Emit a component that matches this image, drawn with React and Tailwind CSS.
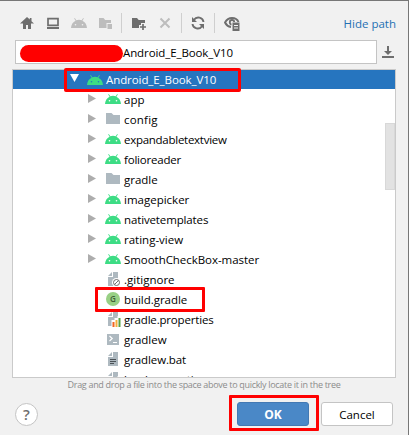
import React from "react";

function Android({ className = "", color = "#3ddc84", eye = "#ffffff" }) {
  return (
    <svg className={className} width="16" height="10" viewBox="0 0 16 10">
      <path d="M0 10C.2 6.600 1.900 4 4.600 2.700L3.200.4l.6-.4 1.500 2.300a8.200 8.200 0 0 1 5.400 0L12.200 0l.6.4-1.400 2.300C14.100 4 15.800 6.600 16 10Z" fill={color} />
      <circle cx="4.500" cy="6.700" r=".8" fill={eye} />
      <circle cx="11.500" cy="6.700" r=".8" fill={eye} />
    </svg>
  );
}

function Folder() {
  return (
    <svg width="16" height="16" viewBox="0 0 16 16">
      <path d="M1 2h5.500l2 2H15v9H1Z" fill="#aeb9c0" />
    </svg>
  );
}

function Page({ children }) {
  return (
    <svg width="16" height="16" viewBox="0 0 16 16">
      <path d="M7 1v4H3Z" fill="#aeb9c0" />
      <path d="M8 1h5v14H3V6h5Z" fill="#aeb9c0" />
      {children}
    </svg>
  );
}

function FileIcon({ kind }) {
  if (kind === "android") return <Android />;
  if (kind === "folder") return <Folder />;
  if (kind === "ignore")
    return (
      <Page>
        <circle cx="11.500" cy="11.500" r="4.500" fill="#fff" />
        <circle cx="11.500" cy="11.500" r="3" fill="none" stroke="#6e6e6e" />
        <path d="m9.400 13.600 4.200-4.200" stroke="#6e6e6e" />
      </Page>
    );
  if (kind === "gradle")
    return (
      <span className="flex size-[14px] items-center justify-center rounded-full bg-[#98d085] text-[8px] leading-none font-semibold text-[#3f5f38]">
        G
      </span>
    );
  if (kind === "props")
    return (
      <Page>
        <path d="M6.500 9h3V7h3V5H16v11H6.500Z" fill="#fff" />
        <path d="M7.500 11h2v5h-2Z" fill="#f26522" />
        <path d="M10.500 9h2v7h-2Z" fill="#f4af3d" />
        <path d="M13.500 7h2v9h-2Z" fill="#59a045" />
      </Page>
    );
  if (kind === "shell")
    return (
      <svg width="16" height="16" viewBox="0 0 16 16">
        <path d="M2 3h12v11H2Z" fill="#aeb9c0" />
        <path d="m4.500 5 2.700 2.500-2.700 2.500M8 11.500h4" fill="none" stroke="#fff" strokeWidth="1.200" />
      </svg>
    );
  return (
    <Page>
      <path d="M5 8.500h6M5 10.500h6M5 12.500h4" stroke="#4b5257" />
    </Page>
  );
}

const rows = [
  { name: "app", kind: "android", dir: true, fit: "tracking-normal" },
  { name: "config", kind: "folder", dir: true, fit: "tracking-[0.2px]" },
  { name: "expandabletextview", kind: "android", dir: true, fit: "tracking-[-0.27px]" },
  { name: "folioreader", kind: "android", dir: true, fit: "tracking-[-0.2px]" },
  { name: "gradle", kind: "folder", dir: true, fit: "tracking-normal" },
  { name: "imagepicker", kind: "android", dir: true, fit: "tracking-normal" },
  { name: "nativetemplates", kind: "android", dir: true, fit: "tracking-[-0.13px]" },
  { name: "rating-view", kind: "android", dir: true, fit: "tracking-normal" },
  { name: "SmoothCheckBox-master", kind: "android", dir: true, fit: "tracking-[-0.05px]" },
  { name: ".gitignore", kind: "ignore", fit: "tracking-normal" },
  { name: "build.gradle", kind: "gradle", fit: "tracking-[-0.04px]" },
  { name: "gradle.properties", kind: "props", fit: "tracking-[-0.18px]" },
  { name: "gradlew", kind: "shell", fit: "tracking-normal" },
  { name: "gradlew.bat", kind: "text", fit: "tracking-[-0.1px]" },
  { name: "local.properties", kind: "props", fit: "tracking-[-0.15px]" },
];

function Toolbar() {
  return (
    <div className="flex h-[39px] items-center pt-[5px] pr-[12px] pl-[19px]">
      <svg width="16" height="16" viewBox="0 0 16 16">
        <path d="M8 2 1 8.500h3V14h3v-4h2v4h3V8.500h3L12.500 6.200V3h-1.700v1.600Z" fill="#6e6e6e" />
      </svg>
      <svg className="ml-[10px]" width="16" height="16" viewBox="0 0 16 16">
        <path d="M3 3.700h10v6.600H3Z" fill="none" stroke="#6e6e6e" strokeWidth="1.700" />
        <path d="M2 12h12v2H2Z" fill="#6e6e6e" />
      </svg>
      <Android className="ml-[10px]" color="#bdbdbd" eye="#f1f1f1" />
      <svg className="ml-[11px]" width="16" height="16" viewBox="0 0 16 16">
        <path d="M1 3h4.500l1.700 2H13v3H8.500v5H1Z" fill="#bdbdbd" />
        <path d="M9.500 9H14v5H9.500Z" fill="#bdbdbd" />
      </svg>
      <i className="ml-[7px] h-[20px] w-px bg-[#cfcfcf]" />
      <svg className="ml-[9px]" width="16" height="16" viewBox="0 0 16 16">
        <path d="M1 3h5l1.700 2H14v3h-4v2H8v3H1Z" fill="#6e6e6e" />
        <path d="M12 9v6M9 12h6" stroke="#6e6e6e" strokeWidth="1.700" />
      </svg>
      <svg className="ml-[10px]" width="16" height="16" viewBox="0 0 16 16">
        <path d="m3.500 3.500 9 9m0-9-9 9" stroke="#bdbdbd" strokeWidth="2" />
      </svg>
      <i className="ml-[8px] h-[20px] w-px bg-[#cfcfcf]" />
      <svg className="ml-[8px]" width="16" height="16" viewBox="0 0 16 16">
        <path d="M13.500 7A5.200 5.200 0 0 0 4 4.800M2.500 9a5.200 5.200 0 0 0 9.500 2.200" fill="none" stroke="#6e6e6e" strokeWidth="1.900" />
        <path d="M2 2v5h5ZM14 14V9H9Z" fill="#6e6e6e" />
      </svg>
      <i className="ml-[8px] h-[20px] w-px bg-[#cfcfcf]" />
      <svg className="ml-[9px]" width="16" height="16" viewBox="0 0 16 16">
        <path d="M7 12C4 11.500 2 9.500 1 7.500 2.500 4.800 5 3 8 3s5.500 1.600 6.500 4" fill="none" stroke="#6e6e6e" strokeWidth="1.900" />
        <circle cx="8" cy="7.200" r="2.200" fill="none" stroke="#6e6e6e" strokeWidth="1.800" />
        <path d="M7.500 7H16v9H7.500Z" fill="#f1f1f1" />
        <path d="M8.500 7.500h7V16h-7Z" fill="#6e6e6e" />
        <path d="M10 10.500h4m-4 2.500h4" stroke="#f1f1f1" />
      </svg>
      <span className="mt-[2px] ml-auto text-[11.5px] text-[#2470b3]">Hide path</span>
    </div>
  );
}

export default function App() {
  return (
    <main className="relative flex h-[435px] w-[409px] flex-col overflow-hidden border-t border-r border-[#777777] bg-[#f1f1f1] font-['Open_Sans','Noto_Sans',sans-serif] text-[11.5px] leading-none text-black">
      <Toolbar />
      <div className="ml-[15px] flex h-[24px] items-center">
        <div className="flex h-[24px] w-[362px] items-center border border-[#c4c4c4] bg-white pl-[4px]">
          <span className="mt-[2px] h-[17px] w-[103px] rounded-full bg-[#ff0000]" />
          <span className="mt-[2px] tracking-[-0.1px] whitespace-nowrap">Android_E_Book_V10</span>
        </div>
        <svg className="ml-[3px]" width="16" height="16" viewBox="0 0 16 16">
          <path d="M7 2h2v5h3l-4 4-4-4h3ZM2 12h12v2H2Z" fill="#6e6e6e" />
        </svg>
      </div>

      <section className="relative mt-[5px] ml-[12px] h-[309px] w-[384px] shrink-0 overflow-hidden border border-[#cacaca] bg-white">
        <div className="mb-px flex h-[19px] items-center bg-[#2675bf] pl-[57px] text-white">
          <svg className="-mt-[3px]" width="9" height="8" viewBox="0 0 9 8"><path d="M0 0h9L4.500 8Z" fill="#fff" /></svg>
          <Android className="ml-[8px]" eye="#2675bf" />
          <span className="mt-px ml-[3px] tracking-[-0.08px] whitespace-nowrap">Android_E_Book_V10</span>
        </div>
        {rows.map((row) => (
          <div key={row.name} className="flex h-[20px] items-center pl-[75px]">
            <svg className="-mt-[3px]" width="8" height="9" viewBox="0 0 8 9">
              {row.dir && <path d="M0 0 8 4.500 0 9Z" fill="#adadad" />}
            </svg>
            <span className="-mt-[2px] ml-[9px] flex w-[16px] justify-center"><FileIcon kind={row.kind} /></span>
            <span className={`ml-[3px] whitespace-nowrap ${row.fit}`}>{row.name}</span>
          </div>
        ))}
        <i className="absolute top-[53px] right-0 h-[67px] w-[10px] border border-[#d8d8d8] bg-[#e2e2e2]" />
      </section>

      <p className="mt-px text-center text-[9px] leading-[12px] tracking-[-0.31px] whitespace-nowrap text-[#8c8c8c]">
        Drag and drop a file into the space above to quickly locate it in the tree
      </p>

      <footer className="mt-[11px] flex items-center pl-[15px]">
        <button className="flex size-[23px] items-center justify-center rounded-full border border-[#c4c4c4] bg-white text-[15px] leading-none font-semibold text-[#6e6e6e]">?</button>
        <button className="ml-[199px] h-[24px] w-[72px] rounded-[3px] border border-[#4379b3] bg-[#4a88c7] pt-px text-[12px] font-bold text-white">OK</button>
        <button className="ml-[12px] h-[24px] w-[72px] rounded-[3px] border border-[#c4c4c4] bg-white pt-px">Cancel</button>
      </footer>

      <i className="absolute top-[67px] left-[64px] h-[24px] w-[177px] rounded-[2px] border-3 border-[#ff0000]" />
      <i className="absolute top-[286px] left-[95px] h-[25px] w-[110px] rounded-[1px] border-3 border-[#ff0000]" />
      <i className="absolute top-[394px] left-[229px] h-[36px] w-[90px] rounded-[1px] border-3 border-[#ff0000]" />
    </main>
  );
}
